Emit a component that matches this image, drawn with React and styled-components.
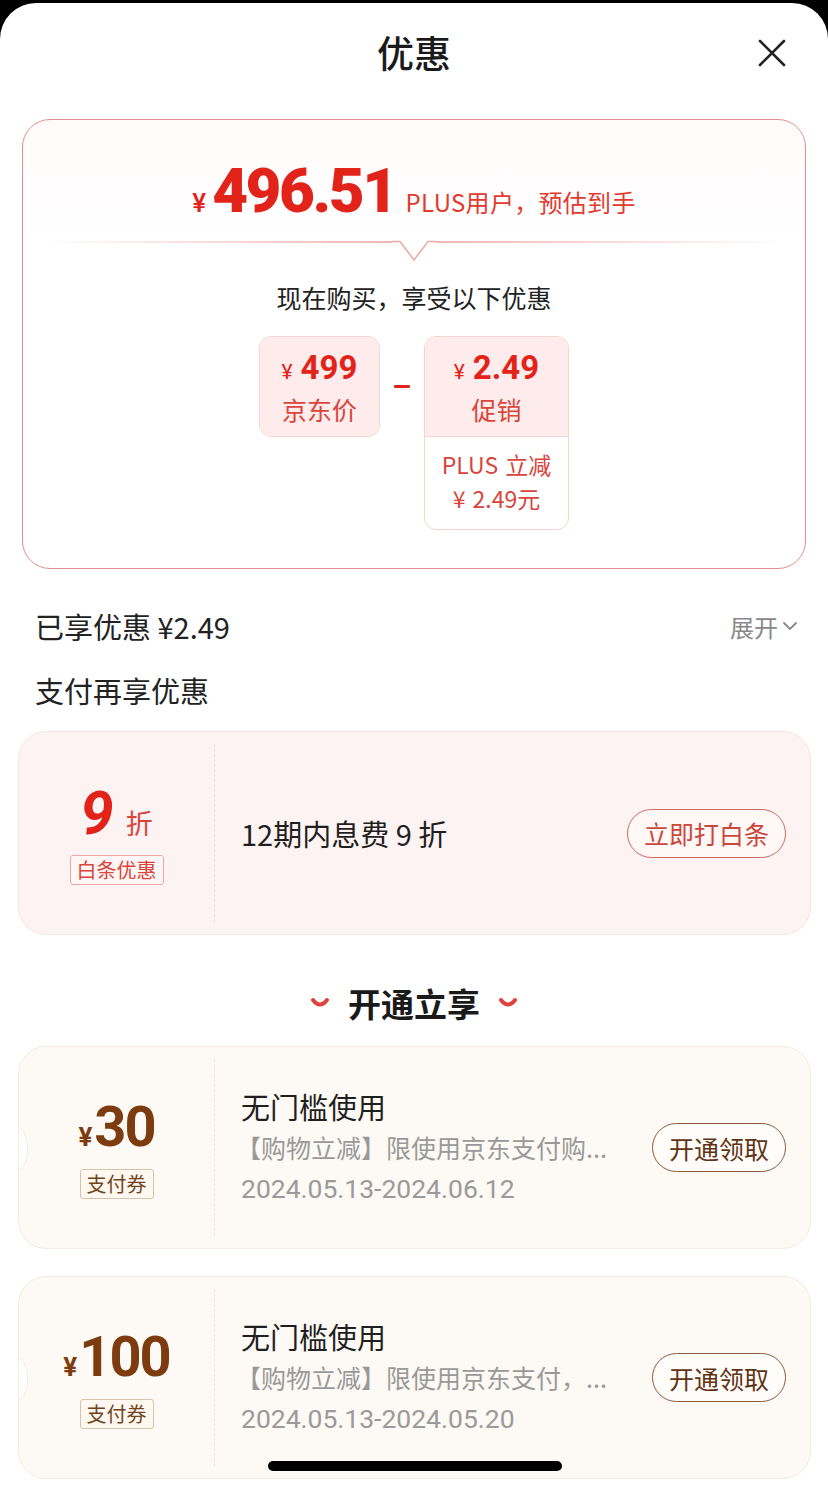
import styled, { createGlobalStyle } from "styled-components";

const GlobalStyle = createGlobalStyle`
  html, body {
    margin: 0;
    padding: 0;
    background: #000;
  }
  body {
    font-family: "Noto Sans CJK SC", "Noto Sans", sans-serif;
    color: #222;
  }
`;

const Sheet = styled.div`
  position: relative;
  margin-top: 3px;
  min-height: 1486px;
  background: #fff;
  border-radius: 36px 36px 0 0;
  overflow: hidden;
`;

const Header = styled.div`
  position: relative;
  height: 100px;
  display: flex;
  align-items: center;
  justify-content: center;
`;

const Title = styled.div`
  font-size: 37px;
  font-weight: 500;
  color: #1a1a1a;
  margin-top: -2px;
`;

const CloseBtn = styled.div`
  position: absolute;
  right: 42px;
  top: 36px;
  width: 28px;
  height: 28px;
`;

const PriceCard = styled.div`
  margin: 16px 22px 0;
  height: 450px;
  box-sizing: border-box;
  border: 1.5px solid #e58f8a;
  border-radius: 28px;
  background: linear-gradient(#fffbfb, #fff 30%);
  padding-top: 34px;
  display: flex;
  flex-direction: column;
  align-items: center;
`;

const PriceRow = styled.div`
  height: 70px;
  display: flex;
  align-items: baseline;
  justify-content: center;
  color: #e2231a;
`;

const Yen = styled.span`
  font-family: "Roboto", sans-serif;
  font-size: ${(p) => p.size || 24}px;
  font-weight: ${(p) => p.weight || 500};
  margin-right: ${(p) => p.gap || 4}px;
`;

const BigPrice = styled.span`
  font-family: "Roboto", sans-serif;
  font-size: 62px;
  font-weight: 900;
  letter-spacing: -2.5px;
`;

const PriceNote = styled.span`
  font-size: 24px;
  margin-left: 10px;
  letter-spacing: 0.3px;
  color: #e33a2f;
`;

const Divider = styled.div`
  width: 745px;
  height: 26px;
  margin-top: 17px;
  display: flex;
  align-items: flex-start;
`;

const DividerLine = styled.div`
  flex: 1;
  height: 1.5px;
  background: linear-gradient(
    ${(p) => (p.right ? "to left" : "to right")},
    rgba(240, 180, 176, 0),
    #f1b7b2
  );
`;

const Lead = styled.div`
  margin-top: 13px;
  font-size: 25px;
  color: #222;
  height: 34px;
  line-height: 34px;
`;

const Formula = styled.div`
  margin-top: 22px;
  display: flex;
  align-items: flex-start;
`;

const Minus = styled.div`
  width: 44px;
  height: 101px;
  display: flex;
  align-items: center;
  justify-content: center;
  &::before {
    content: "";
    width: 16px;
    height: 3px;
    background: #e2231a;
    border-radius: 1px;
  }
`;

const PriceBox = styled.div`
  width: ${(p) => p.w}px;
  box-sizing: border-box;
  border: 1.5px solid #f6d4d1;
  border-radius: 12px;
  overflow: hidden;
  background: #fff;
`;

const BoxTop = styled.div`
  height: 99px;
  background: #fdeceb;
  display: flex;
  flex-direction: column;
  align-items: center;
  justify-content: center;
  gap: 4px;
  color: #e2231a;
`;

const BoxAmount = styled.div`
  display: flex;
  align-items: baseline;
  font-family: "Roboto", sans-serif;
  font-size: 33px;
  font-weight: 700;
  line-height: 36px;
`;

const BoxLabel = styled.div`
  font-size: 25px;
  color: #d9453c;
  line-height: 30px;
`;

const BoxBottom = styled.div`
  height: 93px;
  border-top: 1.5px solid #f6d4d1;
  display: flex;
  flex-direction: column;
  align-items: center;
  justify-content: center;
  font-size: 23px;
  color: #d9453c;
  box-sizing: border-box;
  padding-bottom: 4px;
  word-spacing: 2px;

  div {
    line-height: 34px;
    white-space: nowrap;
  }
`;

const InfoRow = styled.div`
  display: flex;
  align-items: center;
  justify-content: space-between;
  padding: 0 30px 0 35px;
  height: ${(p) => p.h}px;
  margin-top: ${(p) => p.mt || 0}px;
`;

const InfoText = styled.div`
  font-size: 29px;
  color: #222;
`;

const Expand = styled.div`
  display: flex;
  align-items: center;
  gap: 4px;
  font-size: 24px;
  color: #888;
`;

const Card = styled.div`
  position: relative;
  margin: ${(p) => p.mt}px 17px 0 18px;
  height: ${(p) => p.h}px;
  box-sizing: border-box;
  border: 1.5px solid ${(p) => (p.gold ? "#f3ebe1" : "#f5e5e4")};
  border-radius: 28px;
  background: ${(p) => (p.gold ? "#fdf9f4" : "#fdf3f2")};
  display: flex;
  align-items: stretch;
  overflow: hidden;

  ${(p) =>
    p.notch &&
    `
    &::before {
      content: "";
      position: absolute;
      top: 50%;
      left: -11px;
      width: 18px;
      height: 40px;
      margin-top: -20px;
      border-radius: 50%;
      background: #fff;
      border: 1.5px solid #f3ebe1;
    }
  `}
`;

const CardLeft = styled.div`
  width: 195px;
  flex-shrink: 0;
  display: flex;
  flex-direction: column;
  align-items: center;
  justify-content: center;
  border-right: 1.5px dashed ${(p) => (p.gold ? "#f1e4d6" : "#f0dcdb")};
  margin: 12px 0;
  padding-top: ${(p) => p.pt || 0}px;
`;

const Discount = styled.div`
  display: flex;
  align-items: baseline;
  color: #e2231a;
  line-height: 56px;
`;

const DiscountNum = styled.span`
  font-family: "Roboto", sans-serif;
  font-size: 60px;
  font-weight: 700;
  font-style: italic;
  margin-right: 12px;
`;

const DiscountUnit = styled.span`
  font-size: 27px;
  color: #d9453c;
`;

const Tag = styled.div`
  margin-top: ${(p) => p.mt || 8}px;
  padding: 0 6px;
  height: 28px;
  line-height: 28px;
  font-size: 20px;
  border: 1px solid ${(p) => (p.gold ? "#d6c3ad" : "#eba8a3")};
  color: ${(p) => (p.gold ? "#6e4520" : "#d9453c")};
  background: ${(p) => (p.gold ? "#fff8f0" : "#fff7f6")};
  border-radius: 3px;
`;

const CardMain = styled.div`
  flex: 1;
  min-width: 0;
  padding-left: 26px;
  display: flex;
  flex-direction: column;
  justify-content: center;
`;

const MainText = styled.div`
  font-size: 29px;
  color: #1f1f1f;
  line-height: 40px;
`;

const SubText = styled.div`
  font-size: 25px;
  color: #999;
  line-height: 42px;
  white-space: nowrap;
  overflow: hidden;
  text-overflow: ellipsis;
  margin-left: -5px;
`;

const DateText = styled.div`
  font-family: "Roboto", sans-serif;
  font-size: 26.5px;
  color: #9a9a9a;
  line-height: 42px;
`;

const ActionBtn = styled.div`
  flex-shrink: 0;
  align-self: center;
  margin: 0 24px 0 20px;
  height: 49px;
  padding: 0 16px;
  box-sizing: border-box;
  border: 1.5px solid ${(p) => (p.gold ? "#8a5a3c" : "#c96a62")};
  border-radius: 25px;
  display: flex;
  align-items: center;
  font-size: 25px;
  color: ${(p) => (p.gold ? "#5f3415" : "#c9473c")};
  background: ${(p) => (p.gold ? "#fffdfa" : "#fff8f7")};
`;

const SectionTitle = styled.div`
  margin-top: 44px;
  height: 48px;
  display: flex;
  align-items: center;
  justify-content: center;
  gap: 18px;
  font-size: 33px;
  font-weight: 700;
  color: #1a1a1a;
`;

const CouponAmount = styled.div`
  display: flex;
  align-items: baseline;
  color: #7d3c0f;
  line-height: 60px;
`;

const CouponNum = styled.span`
  font-family: "Roboto", sans-serif;
  font-size: 56px;
  font-weight: 700;
  letter-spacing: -2px;
`;

const HomeBar = styled.div`
  position: absolute;
  left: 268px;
  bottom: 18px;
  width: 294px;
  height: 10px;
  border-radius: 5px;
  background: #000;
`;

const Chevron = () => (
  <svg width="20" height="12" viewBox="0 0 20 12">
    <path d="M3 3 Q10 12 17 3" stroke="#e0423a" strokeWidth="4" fill="none" strokeLinecap="round" />
  </svg>
);

const coupons = [
  { amount: "30", desc: "【购物立减】限使用京东支付购...", date: "2024.05.13-2024.06.12", mt: 19 },
  { amount: "100", desc: "【购物立减】限使用京东支付，...", date: "2024.05.13-2024.05.20", mt: 27 },
];

export default function App() {
  return (
    <>
      <GlobalStyle />
      <Sheet>
        <Header>
          <Title>优惠</Title>
          <CloseBtn>
            <svg width="28" height="28" viewBox="0 0 28 28">
              <path d="M2 2 L26 26 M26 2 L2 26" stroke="#222" strokeWidth="2.6" strokeLinecap="round" />
            </svg>
          </CloseBtn>
        </Header>

        <PriceCard>
          <PriceRow>
            <Yen size={26} gap={6}>¥</Yen>
            <BigPrice>496.51</BigPrice>
            <PriceNote>PLUS用户，预估到手</PriceNote>
          </PriceRow>
          <Divider>
            <DividerLine />
            <svg width="44" height="22" viewBox="0 0 44 22" style={{ marginTop: -0.75 }}>
              <path d="M0 1.5 L8 1.5 L22 20 L36 1.5 L44 1.5" stroke="#ecaaa5" strokeWidth="1.5" fill="none" />
            </svg>
            <DividerLine right />
          </Divider>
          <Lead>现在购买，享受以下优惠</Lead>
          <Formula>
            <PriceBox w={121}>
              <BoxTop>
                <BoxAmount>
                  <Yen size={21} gap={8} weight={400}>¥</Yen>499
                </BoxAmount>
                <BoxLabel>京东价</BoxLabel>
              </BoxTop>
            </PriceBox>
            <Minus />
            <PriceBox w={145}>
              <BoxTop>
                <BoxAmount>
                  <Yen size={21} gap={8} weight={400}>¥</Yen>2.49
                </BoxAmount>
                <BoxLabel>促销</BoxLabel>
              </BoxTop>
              <BoxBottom>
                <div>PLUS 立减</div>
                <div>¥ 2.49元</div>
              </BoxBottom>
            </PriceBox>
          </Formula>
        </PriceCard>

        <InfoRow h={52} mt={31}>
          <InfoText>已享优惠 ¥2.49</InfoText>
          <Expand>
            展开
            <svg width="16" height="10" viewBox="0 0 16 10">
              <path d="M2 2 L8 8 L14 2" stroke="#888" strokeWidth="1.8" fill="none" strokeLinecap="round" />
            </svg>
          </Expand>
        </InfoRow>
        <InfoRow h={52} mt={12}>
          <InfoText>支付再享优惠</InfoText>
        </InfoRow>

        <Card mt={15} h={204}>
          <CardLeft pt={4}>
            <Discount>
              <DiscountNum>9</DiscountNum>
              <DiscountUnit>折</DiscountUnit>
            </Discount>
            <Tag mt={4}>白条优惠</Tag>
          </CardLeft>
          <CardMain>
            <MainText>12期内息费 9 折</MainText>
          </CardMain>
          <ActionBtn>立即打白条</ActionBtn>
        </Card>

        <SectionTitle>
          <Chevron />
          开通立享
          <Chevron />
        </SectionTitle>

        {coupons.map((c) => (
          <Card key={c.amount} gold notch mt={c.mt} h={203}>
            <CardLeft gold>
              <CouponAmount>
                <Yen size={26} gap={2} weight={700}>¥</Yen>
                <CouponNum>{c.amount}</CouponNum>
              </CouponAmount>
              <Tag gold mt={2}>支付券</Tag>
            </CardLeft>
            <CardMain>
              <MainText>无门槛使用</MainText>
              <SubText>{c.desc}</SubText>
              <DateText>{c.date}</DateText>
            </CardMain>
            <ActionBtn gold>开通领取</ActionBtn>
          </Card>
        ))}

        <HomeBar />
      </Sheet>
    </>
  );
}
